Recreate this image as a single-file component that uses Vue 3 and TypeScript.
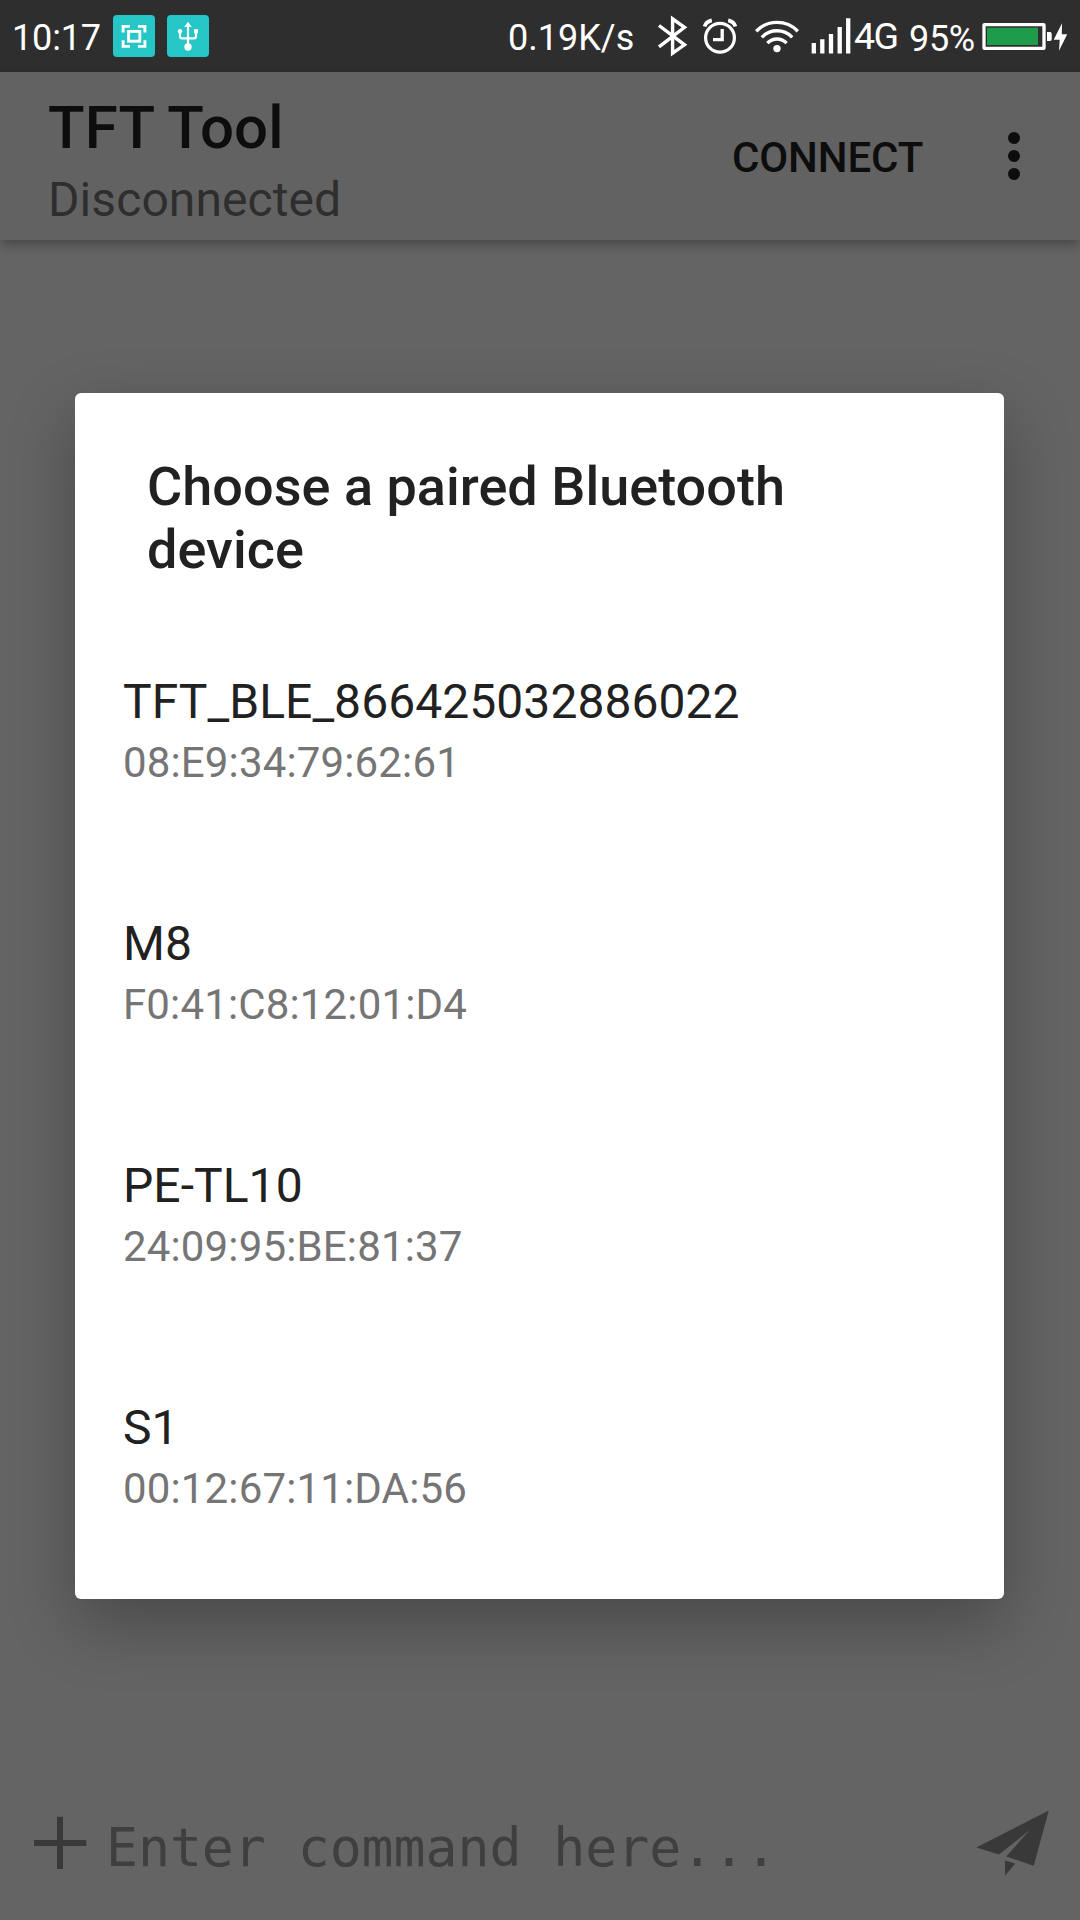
<script setup lang="ts">
interface Device {
  name: string
  address: string
}

const devices: Device[] = [
  { name: 'TFT_BLE_866425032886022', address: '08:E9:34:79:62:61' },
  { name: 'M8', address: 'F0:41:C8:12:01:D4' },
  { name: 'PE-TL10', address: '24:09:95:BE:81:37' },
  { name: 'S1', address: '00:12:67:11:DA:56' },
]
</script>

<template>
  <div class="screen">
    <div class="status">
      <span class="clock">10:17</span>
      <svg class="tile" width="42" height="42" viewBox="0 0 42 42" fill="none" stroke="#fff" stroke-width="2.9">
        <path d="M10.1 17.5V11.4H17M25 11.4H31.9V17.5M31.9 25.3V31.4H25M17 31.4H10.1V25.3" />
        <rect x="15.6" y="16.4" width="11.2" height="9.8" />
      </svg>
      <svg class="tile second" width="42" height="42" viewBox="0 0 42 42" fill="none" stroke="#fff" stroke-width="2.2">
        <path d="M21 10V32M13 16V21.5Q13 23.4 15 23.4H27Q29 23.4 29 21.5V16" />
        <g fill="#fff" stroke="none">
          <path d="M21 6.8L24.8 12H17.2Z" />
          <circle cx="21" cy="32" r="3.7" />
          <circle cx="13" cy="16.2" r="2.2" />
          <rect x="27" y="14.2" width="4" height="4" />
        </g>
      </svg>
      <span class="spacer"></span>
      <span class="speed">0.19K/s</span>
      <svg class="icons" width="197" height="72" viewBox="655 0 197 72" fill="none" stroke="#fff">
        <path d="M659 25.5L684.5 44.8L672.6 53.2V18.8L684.5 27.3L659 46.8" stroke-width="3.4" />
        <circle cx="720" cy="37.7" r="14.4" stroke-width="3.2" />
        <path d="M722.2 29V39.6H713" stroke-width="3.3" />
        <path d="M704.6 26.6Q706 21.5 711.8 20.4M735.4 26.6Q734 21.5 728.2 20.4" stroke-width="3.8" />
        <path d="M756.2 31.2A29 29 0 0 1 797.8 31.2M761.8 37.3A21 21 0 0 1 792.2 37.3M767.4 43.2A13 13 0 0 1 786.6 43.2" stroke-width="3.4" />
        <circle cx="777" cy="48.6" r="3.7" fill="#fff" stroke="none" />
        <path d="M813.8 43V53.4M822.3 39.3V53.4M831 34V53.4M839.7 27V53.4M848.2 18.3V53.4" stroke-width="4.3" />
      </svg>
      <span class="network">4G</span>
      <span class="percent">95%</span>
      <svg class="battery" width="88" height="72" viewBox="982 0 88 72">
        <rect x="984" y="24.6" width="60" height="23.8" rx="0.5" fill="none" stroke="#fff" stroke-width="3.3" />
        <rect x="987" y="27.7" width="51" height="17.3" fill="#1e9b4b" />
        <path d="M1047 32H1050Q1051.7 32 1051.7 34V39Q1051.7 41 1050 41H1047Z" fill="#fff" />
        <path d="M1062 23.3L1053.7 39.7H1059.7L1059 50.7L1067.2 34.3H1061.8Z" fill="#fff" />
      </svg>
    </div>

    <header class="appbar">
      <div class="titles">
        <div class="title">TFT Tool</div>
        <div class="subtitle">Disconnected</div>
      </div>
      <div class="connect">CONNECT</div>
      <svg class="more" width="12" height="48" viewBox="0 0 12 48" fill="#0d0d0d">
        <circle cx="6" cy="6" r="6" />
        <circle cx="6" cy="24" r="6" />
        <circle cx="6" cy="42" r="6" />
      </svg>
    </header>

    <main class="terminal"></main>

    <footer class="composer">
      <svg width="54" height="54" viewBox="33 1816 54 54" fill="none" stroke="#393939" stroke-width="6">
        <path d="M34 1843H86.3M60 1816.7V1869" />
      </svg>
      <span class="hint">Enter command here...</span>
      <svg class="send" width="74" height="68" viewBox="976 1809.5 74 68" fill="#393939">
        <path d="M976.3 1848L1048.8 1811L1033.7 1866.2L1006.3 1857L1029.8 1830.5L999 1855Z" />
        <path d="M1005 1861L1015.2 1864L1005 1876.3Z" />
      </svg>
    </footer>

    <div class="overlay">
      <section class="dialog">
        <h2>Choose a paired Bluetooth device</h2>
        <div v-for="device in devices" :key="device.address" class="device">
          <div class="name">{{ device.name }}</div>
          <div class="address">{{ device.address }}</div>
        </div>
      </section>
    </div>
  </div>
</template>

<style>
body {
  margin: 0;
}
</style>

<style scoped>
.screen {
  position: relative;
  display: flex;
  flex-direction: column;
  width: 1080px;
  height: 1920px;
  overflow: hidden;
  background: #646464;
  font-family: Roboto, 'Noto Sans', sans-serif;
}

.status {
  display: flex;
  align-items: flex-start;
  flex: none;
  height: 72px;
  background: #2e2e2e;
  color: #fff;
  font-size: 36px;
  line-height: 76px;
  white-space: nowrap;
}

.clock {
  box-sizing: border-box;
  width: 113px;
  padding-left: 12px;
  letter-spacing: -0.15px;
}

.tile {
  flex: none;
  margin-top: 15px;
  border-radius: 4px;
  background: #26c6c6;
}

.second {
  margin-left: 12px;
}

.spacer {
  flex: 1;
}

.speed {
  width: 147px;
}

.icons,
.battery {
  flex: none;
}

.network {
  width: 55px;
  margin-left: 2px;
  font-size: 37.5px;
  line-height: 73px;
  letter-spacing: -1.6px;
}

.percent {
  width: 73px;
  line-height: 78px;
  letter-spacing: -0.3px;
}

.battery {
  margin-right: 10px;
}

.appbar {
  display: flex;
  align-items: flex-start;
  flex: none;
  height: 168px;
  background: #626262;
  box-shadow: 0 5px 12px -1px rgba(0, 0, 0, 0.32);
  color: #0d0d0d;
}

.titles {
  flex: 1;
  padding: 20px 0 0 48px;
}

.title {
  font-size: 60px;
  font-weight: 500;
  line-height: 71px;
  letter-spacing: 0.1px;
}

.subtitle {
  color: #2e2e2e;
  font-size: 48px;
  line-height: 73px;
  letter-spacing: 0.08px;
}

.connect {
  width: 276px;
  font-size: 42px;
  font-weight: 500;
  line-height: 171px;
  letter-spacing: -0.12px;
}

.more {
  margin: 60px 60px 0 0;
}

.terminal {
  flex: 1;
}

.composer {
  display: flex;
  align-items: center;
  flex: none;
  height: 154px;
  padding: 0 30px 0 33px;
}

.hint {
  flex: 1;
  margin-left: 19px;
  padding-top: 9px;
  color: #3f3f3f;
  font-family: 'DejaVu Sans Mono', monospace;
  font-size: 53.2px;
  line-height: 62px;
  letter-spacing: -0.07px;
}

.overlay {
  position: absolute;
  inset: 72px 0 0;
  display: flex;
  justify-content: center;
  align-items: center;
}

.dialog {
  box-sizing: border-box;
  width: 929px;
  height: 1206px;
  margin-right: 1px;
  padding: 62px 48px 0;
  border-radius: 6px;
  background: #fff;
  box-shadow: 0 24px 66px rgba(0, 0, 0, 0.28);
  color: #212121;
}

h2 {
  margin: 0 24px 31px;
  font-size: 54px;
  font-weight: 500;
  line-height: 63px;
  letter-spacing: 0.03px;
}

.device {
  box-sizing: border-box;
  height: 242px;
  padding-top: 60px;
}

.name {
  font-size: 48px;
  line-height: 60px;
  letter-spacing: 0.06px;
}

.address {
  color: #757575;
  font-size: 42px;
  line-height: 62px;
  letter-spacing: 0.15px;
}
</style>
